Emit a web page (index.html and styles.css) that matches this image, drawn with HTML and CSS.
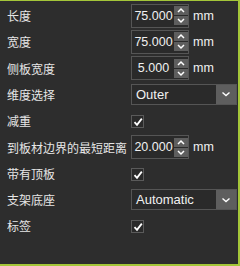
FILE: index.html
```html
<!DOCTYPE html>
<html>
<head>
<meta charset="utf-8">
<link rel="stylesheet" href="styles.css">
</head>
<body>
<div class="panel">
  <div class="form">
    <div class="label">长度</div>
    <div class="field">
      <div class="spin"><span class="val">75.000</span>
        <span class="btns"><span class="btn"><svg viewBox="0 0 14 9" width="14" height="9"><polyline points="4,6 7,3 10,6"/></svg></span><span class="btn"><svg viewBox="0 0 14 9" width="14" height="9"><polyline points="4,3 7,6 10,3"/></svg></span></span>
      </div><span class="unit">mm</span>
    </div>

    <div class="label">宽度</div>
    <div class="field">
      <div class="spin"><span class="val">75.000</span>
        <span class="btns"><span class="btn"><svg viewBox="0 0 14 9" width="14" height="9"><polyline points="4,6 7,3 10,6"/></svg></span><span class="btn"><svg viewBox="0 0 14 9" width="14" height="9"><polyline points="4,3 7,6 10,3"/></svg></span></span>
      </div><span class="unit">mm</span>
    </div>

    <div class="label">侧板宽度</div>
    <div class="field">
      <div class="spin"><span class="val">5.000</span>
        <span class="btns"><span class="btn"><svg viewBox="0 0 14 9" width="14" height="9"><polyline points="4,6 7,3 10,6"/></svg></span><span class="btn"><svg viewBox="0 0 14 9" width="14" height="9"><polyline points="4,3 7,6 10,3"/></svg></span></span>
      </div><span class="unit">mm</span>
    </div>

    <div class="label">维度选择</div>
    <div class="field">
      <div class="combo"><span class="ctext">Outer</span><span class="carrow"><svg viewBox="0 0 20 20" width="20" height="20"><polyline points="6.5,8.5 10,11.5 13.5,8.5"/></svg></span></div>
    </div>

    <div class="label">减重</div>
    <div class="field">
      <span class="check"><svg viewBox="0 0 12 12" width="12" height="12"><polyline points="2.5,6.2 5,8.8 9.8,2.6"/></svg></span>
    </div>

    <div class="label">到板材边界的最短距离</div>
    <div class="field">
      <div class="spin"><span class="val">20.000</span>
        <span class="btns"><span class="btn"><svg viewBox="0 0 14 9" width="14" height="9"><polyline points="4,6 7,3 10,6"/></svg></span><span class="btn"><svg viewBox="0 0 14 9" width="14" height="9"><polyline points="4,3 7,6 10,3"/></svg></span></span>
      </div><span class="unit">mm</span>
    </div>

    <div class="label">带有顶板</div>
    <div class="field">
      <span class="check"><svg viewBox="0 0 12 12" width="12" height="12"><polyline points="2.5,6.2 5,8.8 9.8,2.6"/></svg></span>
    </div>

    <div class="label">支架底座</div>
    <div class="field">
      <div class="combo"><span class="ctext">Automatic</span><span class="carrow"><svg viewBox="0 0 20 20" width="20" height="20"><polyline points="6.5,8.5 10,11.5 13.5,8.5"/></svg></span></div>
    </div>

    <div class="label">标签</div>
    <div class="field">
      <span class="check"><svg viewBox="0 0 12 12" width="12" height="12"><polyline points="2.5,6.2 5,8.8 9.8,2.6"/></svg></span>
    </div>
  </div>
</div>
</body>
</html>
```

FILE: styles.css
```css
* { box-sizing: border-box; }
html, body { margin: 0; padding: 0; background: #2d2d2d; }
.panel {
  width: 240px;
  height: 266px;
  background: #2d2d2d;
  border-top: 1px solid #a4c639;
  border-right: 2px solid #a4c639;
  border-bottom: 2px solid #a4c639;
  overflow: hidden;
}
.form {
  display: grid;
  grid-template-columns: 124px 1fr;
  grid-auto-rows: 26.3px;
  padding: 1.4px 0 0 7px;
}
.label {
  display: flex;
  align-items: center;
  font-family: "Noto Sans CJK SC", "Noto Sans", sans-serif;
  font-size: 12px;
  color: #e6e6e6;
  white-space: nowrap;
  overflow: hidden;
}
.field {
  display: flex;
  align-items: center;
  font-family: "Liberation Sans", Arial, sans-serif;
  color: #f0f0f0;
}
.spin {
  width: 58px;
  height: 24px;
  border: 1px solid #555;
  background: #2a2a2a;
  display: flex;
  align-items: center;
}
.val {
  flex: 1;
  text-align: center;
  font-size: 12.5px;
  padding-left: 1px;
}
.btns {
  display: flex;
  flex-direction: column;
  gap: 1px;
  margin-right: 0;
  padding-top: 0;
}
.btn {
  width: 14px;
  height: 9px;
  background: #5e5e5e;
  display: block;
}
.btn svg, .carrow svg, .check svg { display: block; }
.btn polyline {
  fill: none;
  stroke: #fff;
  stroke-width: 1.5;
}
.unit {
  margin-left: 4px;
  font-size: 12.5px;
}
.combo {
  width: 106px;
  height: 21px;
  border: 1px solid #555;
  background: #2a2a2a;
  display: flex;
  align-items: stretch;
}
.ctext {
  flex: 1;
  display: flex;
  align-items: center;
  padding-left: 4px;
  font-size: 13px;
}
.carrow {
  width: 20px;
  background: #5e5e5e;
  display: flex;
  align-items: center;
  justify-content: center;
}
.carrow polyline {
  fill: none;
  stroke: #fff;
  stroke-width: 1.4;
}
.check {
  width: 13px;
  height: 13px;
  border: 1px solid #5a5a5a;
  background: #2a2a2a;
  display: block;
  margin-top: 2px;
}
.check polyline {
  fill: none;
  stroke: #fff;
  stroke-width: 1.8;
}
```
